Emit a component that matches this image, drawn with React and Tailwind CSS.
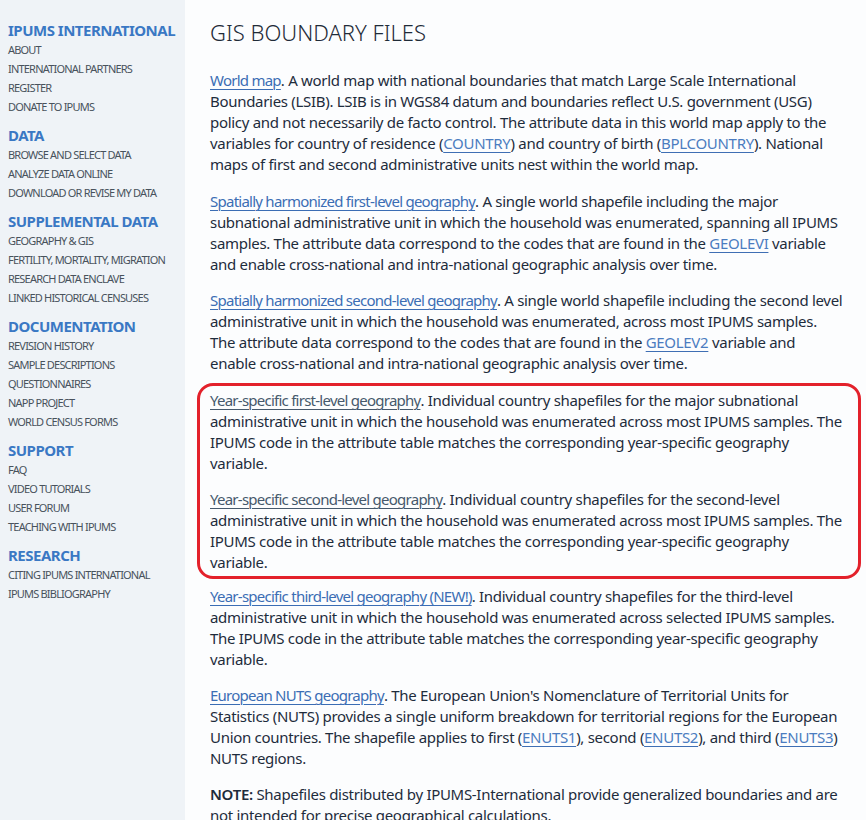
import React from 'react';

const nav = [
    { title: 'IPUMS INTERNATIONAL', items: ['ABOUT', 'INTERNATIONAL PARTNERS', 'REGISTER', 'DONATE TO IPUMS'] },
    { title: 'DATA', items: ['BROWSE AND SELECT DATA', 'ANALYZE DATA ONLINE', 'DOWNLOAD OR REVISE MY DATA'] },
    { title: 'SUPPLEMENTAL DATA', items: ['GEOGRAPHY & GIS', 'FERTILITY, MORTALITY, MIGRATION', 'RESEARCH DATA ENCLAVE', 'LINKED HISTORICAL CENSUSES'] },
    { title: 'DOCUMENTATION', items: ['REVISION HISTORY', 'SAMPLE DESCRIPTIONS', 'QUESTIONNAIRES', 'NAPP PROJECT', 'WORLD CENSUS FORMS'] },
    { title: 'SUPPORT', items: ['FAQ', 'VIDEO TUTORIALS', 'USER FORUM', 'TEACHING WITH IPUMS'] },
    { title: 'RESEARCH', items: ['CITING IPUMS INTERNATIONAL', 'IPUMS BIBLIOGRAPHY'] },
];

// lead links are set tighter than body text, as in the original condensed face
const Lead = ({ children, visited }) => (
    <a
        href="#"
        className={`tracking-[-0.75px] underline underline-offset-[3px] decoration-1 ${visited ? 'text-[#46596c] decoration-[#46596c]' : 'text-[#3b6db4] decoration-[#3b6db4]'}`}
    >
        {children}
    </a>
);

const Var = ({ children }) => (
    <a href="#" className="text-[#4b7cc0] underline underline-offset-[3px] decoration-1 decoration-[#3f6fb4]">
        {children}
    </a>
);

const Sidebar = () => (
    <aside className="w-[185px] shrink-0 bg-[#eff3f7] pl-2 pt-[20px] min-h-[820px]">
        {nav.map((s) => (
            <div key={s.title} className="mb-[9px]">
                <h3 className="whitespace-nowrap text-[15px] leading-[20px] font-bold text-[#3a78c4] tracking-[-0.5px]">{s.title}</h3>
                <ul>
                    {s.items.map((it) => (
                        <li key={it} className="whitespace-nowrap text-[11px] leading-[19px] text-[#48525c] tracking-[-0.8px]">
                            <a href="#">{it}</a>
                        </li>
                    ))}
                </ul>
            </div>
        ))}
    </aside>
);

const App = () => {
    return (
        <div className="flex min-h-[820px] bg-[#fcfdfe] font-['Noto_Sans',sans-serif] text-[#1e2c3c]">
            <Sidebar />
            <main className="flex-1 pl-[25px] pr-[22px] pt-[18px] text-[15px] leading-[21px] tracking-[-0.3px]">
                <h1 className="text-[22px] leading-[28px] font-light text-[#1f2b38] mb-[24px] tracking-normal">GIS BOUNDARY FILES</h1>

                <p className="mb-[16px]">
                    <Lead>World map</Lead>. A world map with national boundaries that match Large Scale International
                    Boundaries (LSIB). LSIB is in WGS84 datum and boundaries reflect U.S. government (USG) policy and not
                    necessarily de facto control. The attribute data in this world map apply to the variables for country of
                    residence (<Var>COUNTRY</Var>) and country of birth (<Var>BPLCOUNTRY</Var>). National maps of first and
                    second administrative units nest within the world map.
                </p>

                <p className="mb-[15px]">
                    <Lead>Spatially harmonized first-level geography</Lead>. A single world shapefile including the major
                    subnational administrative unit in which the household was enumerated, spanning all IPUMS samples. The
                    attribute data correspond to the codes that are found in the <Var>GEOLEVI</Var> variable and enable
                    cross-national and intra-national geographic analysis over time.
                </p>

                <p>
                    <Lead>Spatially harmonized second-level geography</Lead>. A single world shapefile including the second
                    level administrative unit in which the household was enumerated, across most IPUMS samples. The
                    attribute data correspond to the codes that are found in the <Var>GEOLEV2</Var> variable and enable
                    cross-national and intra-national geographic analysis over time.
                </p>

                <div className="mt-[9px] mb-[7px] -ml-[13px] -mr-[17px] pl-[10px] pr-[14px] pt-[4px] pb-[3px] border-[3px] border-[#e3212b] rounded-[16px]">
                    <p className="mb-[15px]">
                        <Lead visited>Year-specific first-level geography</Lead>. Individual country shapefiles for the major
                        subnational administrative unit in which the household was enumerated across most IPUMS samples. The
                        IPUMS code in the attribute table matches the corresponding year-specific geography variable.
                    </p>
                    <p>
                        <Lead visited>Year-specific second-level geography</Lead>. Individual country shapefiles for the
                        second-level administrative unit in which the household was enumerated across most IPUMS samples. The
                        IPUMS code in the attribute table matches the corresponding year-specific geography variable.
                    </p>
                </div>

                <p className="mb-[15px]">
                    <Lead>Year-specific third-level geography (NEW!)</Lead>. Individual country shapefiles for the
                    third-level administrative unit in which the household was enumerated across selected IPUMS samples.
                    The IPUMS code in the attribute table matches the corresponding year-specific geography variable.
                </p>

                <p className="mb-[15px]">
                    <Lead>European NUTS geography</Lead>. The European Union's Nomenclature of Territorial Units for
                    Statistics (NUTS) provides a single uniform breakdown for territorial regions for the European Union
                    countries. The shapefile applies to first (<Var>ENUTS1</Var>), second (<Var>ENUTS2</Var>), and third
                    (<Var>ENUTS3</Var>) NUTS regions.
                </p>

                <p>
                    <span className="font-semibold">NOTE:</span> Shapefiles distributed by IPUMS-International provide
                    generalized boundaries and are not intended for precise geographical calculations.
                </p>
            </main>
        </div>
    );
};

export default App;
